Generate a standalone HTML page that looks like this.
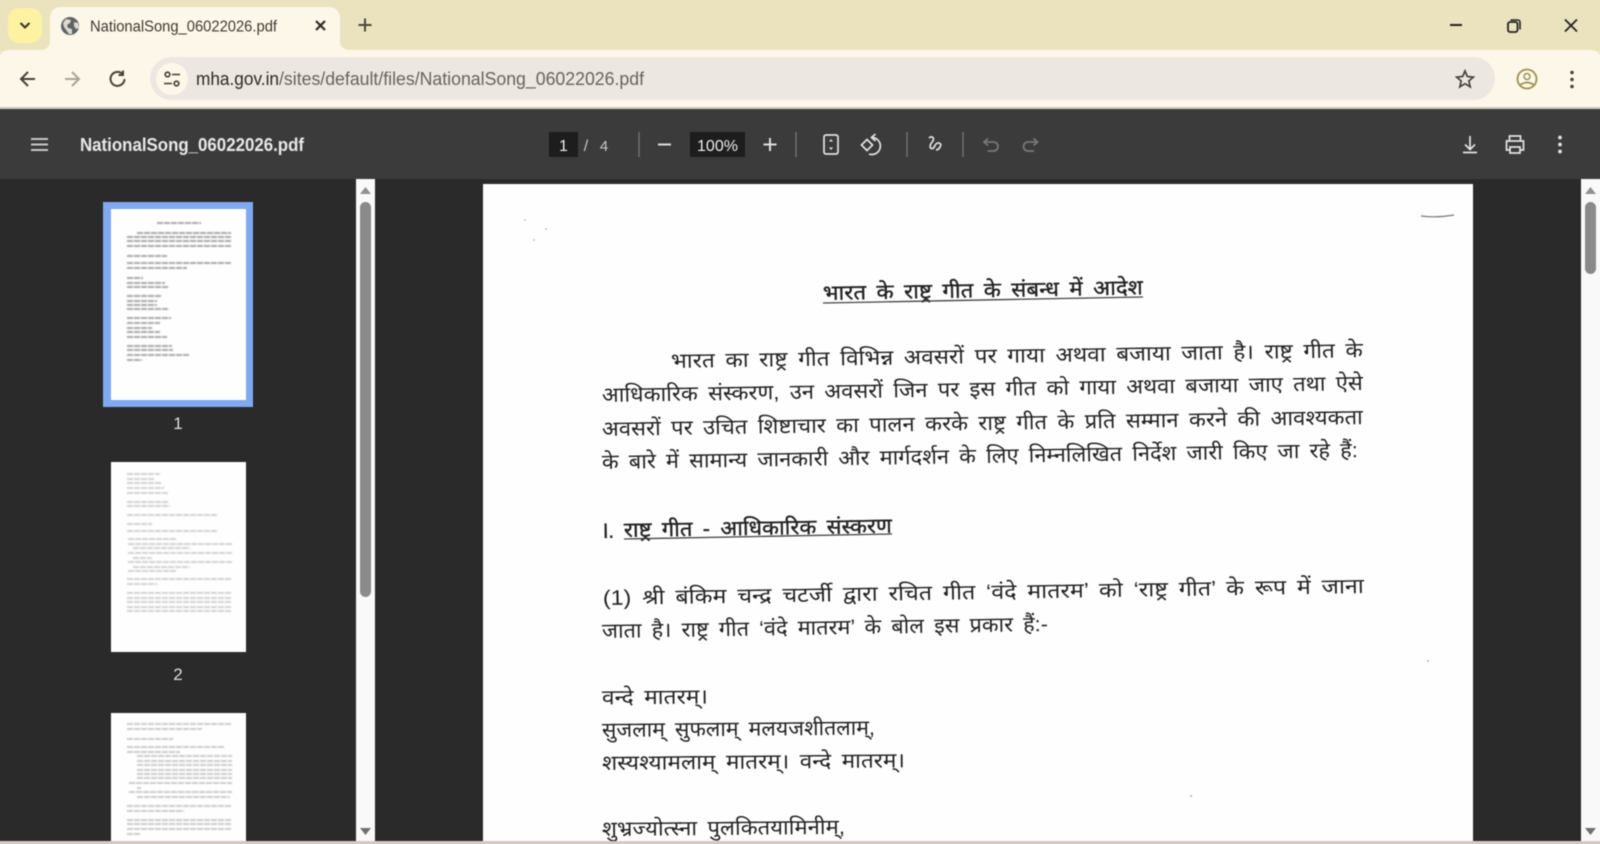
<!DOCTYPE html>
<html lang="hi"><head><meta charset="utf-8"><title>NationalSong_06022026.pdf</title>
<style>
html,body{margin:0;padding:0;width:1600px;height:844px;overflow:hidden;background:#2a2a2b}
svg{display:block;position:absolute;left:0;top:0;overflow:visible}
.u{font-family:"Liberation Sans",sans-serif}
.h{font-family:"Liberation Sans","Noto Sans Devanagari","Lohit Devanagari","FreeSans","DejaVu Sans",sans-serif;font-size:21px;fill:#222;word-spacing:4px}
.b{stroke:#222;stroke-width:.35px}
.ic{fill:none;stroke:#e3e3e3;stroke-width:1.7}
</style></head><body>
<svg width="1600" height="844" viewBox="0 0 1600 844" xmlns="http://www.w3.org/2000/svg" style="filter:blur(.45px)">
<defs><clipPath id="pg"><rect x="483" y="184" width="990" height="657"/></clipPath></defs>
<!-- browser chrome -->
<rect x="-6" y="-6" width="1612" height="56" fill="#ebe3bd"/>
<rect x="-6" y="50" width="1612" height="58" fill="#fdf7e9"/>
<path d="M0 58Q0 50 10 50H1590Q1600 50 1600 58V50H0Z" fill="#ebe3bd"/>
<rect x="-6" y="107" width="1612" height="2" fill="#cfcabb"/>
<rect x="8" y="8" width="34" height="35" rx="11" fill="#fcf2a2"/>
<path d="M20.500 23l4.500 4.500 4.500-4.500" fill="none" stroke="#33311f" stroke-width="2"/>
<path d="M40 50Q50 50 50 40V19Q50 7 62 7H328Q340 7 340 19V40Q340 50 350 50Z" fill="#fdf7e9"/>
<circle cx="70" cy="26" r="9" fill="#5f6368"/>
<path d="M66 19l5 1-1 3-3 2 1 3 4 1v5l-3 0-5-7-1-4zM74 22l4 1 1 5-3 1-2-3z" fill="#fdf7e9" opacity=".8"/>
<text class="u" x="90" y="31.500" font-size="15.500" fill="#3d3a33" textLength="187" lengthAdjust="spacingAndGlyphs">NationalSong_06022026.pdf</text>
<path d="M316 21l9 9M325 21l-9 9" stroke="#2e2c26" stroke-width="2.200"/>
<path d="M365 18.500v13M358.500 25h13" stroke="#4a473c" stroke-width="2"/>
<path d="M1450 25h12" stroke="#222" stroke-width="2"/>
<rect x="1508" y="22" width="9.500" height="10" rx="2" fill="none" stroke="#222" stroke-width="1.800"/>
<path d="M1510.500 20h7q2.500 0 2.500 2.500v7" fill="none" stroke="#222" stroke-width="1.600"/>
<path d="M1565 19.500l12 12M1577 19.500l-12 12" stroke="#222" stroke-width="1.800"/>
<!-- nav -->
<path d="M35 79H21M28 72l-7 7 7 7" fill="none" stroke="#45433a" stroke-width="2"/>
<path d="M65 79h14M72 72l7 7-7 7" fill="none" stroke="#a8a598" stroke-width="2"/>
<path d="M124.500 79a7 7 0 1 1-2.200-5.200M123 70.500v4.500h-4.500" fill="none" stroke="#45433a" stroke-width="2"/>
<rect x="150" y="57" width="1345" height="43" rx="21.500" fill="#ece8e1"/>
<circle cx="172" cy="79" r="16" fill="#fdf7e9"/>
<circle cx="167.500" cy="74.500" r="2.300" fill="none" stroke="#3e3c34" stroke-width="1.600"/>
<circle cx="176.500" cy="83.500" r="2.300" fill="none" stroke="#3e3c34" stroke-width="1.600"/>
<path d="M172 74.500h8M164 83.500h8" stroke="#3e3c34" stroke-width="1.600"/>
<text class="u" x="196" y="85" font-size="18" fill="#2c2a25" textLength="83" lengthAdjust="spacingAndGlyphs">mha.gov.in</text>
<text class="u" x="279" y="85" font-size="18" fill="#66645c" textLength="365" lengthAdjust="spacingAndGlyphs">/sites/default/files/NationalSong_06022026.pdf</text>
<path d="M1465 71l2.300 5.500 6 .6-4.500 3.900 1.400 5.800-5.200-3.100-5.200 3.100 1.400-5.800-4.500-3.900 6-.6z" fill="none" stroke="#45433a" stroke-width="1.700"/>
<circle cx="1527" cy="79" r="9.500" fill="none" stroke="#9c9050" stroke-width="1.800"/>
<circle cx="1527" cy="76.500" r="3" fill="none" stroke="#9c9050" stroke-width="1.500"/>
<path d="M1520 85q7-5 14 0" fill="none" stroke="#9c9050" stroke-width="1.600"/>
<g fill="#45433a"><circle cx="1572" cy="72.500" r="1.800"/><circle cx="1572" cy="79.500" r="1.800"/><circle cx="1572" cy="86.500" r="1.800"/></g>
<!-- pdf toolbar -->
<rect x="-6" y="109" width="1612" height="70" fill="#3b3b3b"/>
<rect x="-6" y="179" width="1612" height="671" fill="#2a2a2b"/>
<path d="M31 139h17M31 144.500h17M31 150h17" stroke="#c8c8c8" stroke-width="2"/>
<text class="u" x="80" y="151" font-size="18.500" font-weight="700" fill="#e8e8e8" textLength="224" lengthAdjust="spacingAndGlyphs">NationalSong_06022026.pdf</text>
<rect x="549" y="132" width="29" height="25" fill="#1d1d1d"/>
<text class="u" x="563.500" y="151" font-size="16" fill="#eee" text-anchor="middle">1</text>
<text class="u" x="586" y="151" font-size="16" fill="#c8c8c8" text-anchor="middle">/</text>
<text class="u" x="604" y="151" font-size="15" fill="#c8c8c8" text-anchor="middle">4</text>
<path d="M639 132v25M796 132v25M907 132v25M963 132v25" stroke="#777" stroke-width="1.300"/>
<path d="M658 144.500h13" stroke="#ddd" stroke-width="2"/>
<rect x="690" y="132" width="55" height="25" fill="#1d1d1d"/>
<text class="u" x="717.500" y="151" font-size="16" fill="#eee" text-anchor="middle">100%</text>
<path d="M770 138v13M763.500 144.500h13" stroke="#ddd" stroke-width="2"/>
<rect x="824" y="135" width="14" height="19" rx="2" class="ic"/>
<path d="M829 141.500l2-2.500 2 2.500zM829 147.500l2 2.500 2-2.500z" fill="#e3e3e3"/>
<path d="M872 137.500a8.500 8.500 0 1 1-3 16.500" class="ic"/>
<path d="M875.500 134l-4 3.500 4 3.500" class="ic"/>
<path d="M867 139.500l5.500 5.500-5.500 5.500-5.500-5.500z" class="ic"/>
<path d="M929 138q2-2 4-.5 1.500 2-2 6-2 4 .5 5 2 .5 3.500-3 1.500-3 4-2.500 3 1 1 4-1 2.500-4 3" class="ic"/>
<path d="M984.500 142h9a4.500 4.500 0 0 1 0 9h-6M988 138.500l-4 3.500 4 3.500" fill="none" stroke="#777" stroke-width="1.800"/>
<path d="M1037 142h-9a4.500 4.500 0 0 0 0 9h6M1033.500 138.500l4 3.500-4 3.500" fill="none" stroke="#777" stroke-width="1.800"/>
<path d="M1470 136v13M1465 144.500l5 5 5-5M1463 152.500h14" class="ic"/>
<path d="M1509.500 141v-5h11v5M1510 150h-3.500v-9h17v9H1520M1510 147h10v6h-10z" class="ic"/>
<g fill="#e3e3e3"><circle cx="1560" cy="137.500" r="1.900"/><circle cx="1560" cy="144.500" r="1.900"/><circle cx="1560" cy="151.500" r="1.900"/></g>
<!-- sidebar scrollbar -->
<rect x="356" y="179" width="19" height="662" fill="#f9f9f9"/>
<rect x="360" y="202" width="11" height="395" rx="5.500" fill="#8a8a8a"/>
<path d="M360 194l5.500-7 5.500 7z" fill="#909090"/>
<path d="M360 828l5.500 7 5.500-7z" fill="#707070"/>
<!-- right scrollbar -->
<rect x="1581" y="179" width="25" height="662" fill="#f9f9f9"/>
<rect x="1585" y="202" width="11" height="72" rx="5.500" fill="#8a8a8a"/>
<path d="M1585 194l5.500-7 5.500 7z" fill="#909090"/>
<path d="M1585 828l5.500 7 5.500-7z" fill="#707070"/>
<!-- thumbnails -->
<rect x="103" y="202" width="150" height="205" fill="#7fa9f0"/>
<rect x="111" y="209" width="135" height="191" fill="#fefefe"/>
<rect x="111" y="462" width="135" height="190" fill="#fefefe"/>
<rect x="111" y="713" width="135" height="128" fill="#fefefe"/>
<g style="filter:blur(.6px)">
<path fill="none" stroke="#8c8c8c" stroke-width="1.600" stroke-dasharray="6 1" d="M157 223h44M137 233h94M127 237h104M127 241h104M127 246h104M127 256h40M127 263h104M127 268h60M127 278h16M127 283h38M127 287h42M127 296h34M127 301h30M127 305h30M127 309h41M127 318h44M127 323h33M127 328h25M127 332h33M127 337h40M127 346h45M127 350h46M127 355h62M127 360h15"/>
<path fill="none" stroke="#c4c4c4" stroke-width="1.500" stroke-dasharray="6 1" d="M127 474h33M127 479h27M127 483h34M127 488h37M127 493h41M127 502h42M127 506h43M127 515h90M127 524h25M127 531h90M128 539h49M128 544h104M133 548h57M128 553h104M133 558h19M128 562h104M133 567h57M128 571h49M127 579h104M127 584h30M127 593h104M127 598h104M127 602h104M127 607h105M127 611h105"/>
<path fill="none" stroke="#bababa" stroke-width="1.500" stroke-dasharray="6 1" d="M127 724h105M127 729h75M127 739h46M127 747h97M127 752h53M137 756h95M137 761h95M137 765h95M137 770h95M137 774h95M137 778h95M129 783h103M137 788h4M129 792h103M137 797h93M127 806h105M127 811h57M127 820h105M127 824h105M127 829h105M127 834h14"/>
</g>
<text class="u" x="178" y="429" font-size="17" fill="#ddd" text-anchor="middle">1</text>
<text class="u" x="178" y="680" font-size="17" fill="#ddd" text-anchor="middle">2</text>
<!-- pdf page -->
<rect x="483" y="184" width="990" height="657" fill="#fefefe"/>
<g clip-path="url(#pg)">
<path d="M1421 216q15 2 33-1" fill="none" stroke="#777" stroke-width="1.200"/>
<g fill="#aaa"><circle cx="525" cy="220" r=".8"/><circle cx="546" cy="229" r=".8"/><circle cx="534" cy="240" r=".8"/><circle cx="1428" cy="661" r="1"/><circle cx="1191" cy="796" r="1"/></g>
<text class="h b" transform="translate(823 300) rotate(-1)" textLength="320" lengthAdjust="spacingAndGlyphs">भारत के राष्ट्र गीत के संबन्ध में आदेश</text>
<path d="M823 303L1143 297" stroke="#444" stroke-width="1.300"/>
<text class="h" transform="translate(671 368) rotate(-.9)" textLength="692" lengthAdjust="spacingAndGlyphs">भारत का राष्ट्र गीत विभिन्न अवसरों पर गाया अथवा बजाया जाता है। राष्ट्र गीत के</text>
<text class="h" transform="translate(602 402) rotate(-.9)" textLength="761" lengthAdjust="spacingAndGlyphs">आधिकारिक संस्करण, उन अवसरों जिन पर इस गीत को गाया अथवा बजाया जाए तथा ऐसे</text>
<text class="h" transform="translate(602 436) rotate(-.9)" textLength="761" lengthAdjust="spacingAndGlyphs">अवसरों पर उचित शिष्टाचार का पालन करके राष्ट्र गीत के प्रति सम्मान करने की आवश्यकता</text>
<text class="h" transform="translate(602 469) rotate(-.9)" textLength="756" lengthAdjust="spacingAndGlyphs">के बारे में सामान्य जानकारी और मार्गदर्शन के लिए निम्नलिखित निर्देश जारी किए जा रहे हैं:</text>
<text class="h b" transform="translate(603 538) rotate(-.9)" textLength="11" lengthAdjust="spacingAndGlyphs">I.</text>
<text class="h b" transform="translate(624 537) rotate(-.9)" textLength="268" lengthAdjust="spacingAndGlyphs">राष्ट्र गीत - आधिकारिक संस्करण</text>
<path d="M624 539L892 534" stroke="#444" stroke-width="1.300"/>
<text class="h" transform="translate(603 605) rotate(-.9)" textLength="761" lengthAdjust="spacingAndGlyphs">(1) श्री बंकिम चन्द्र चटर्जी द्वारा रचित गीत ‘वंदे मातरम’ को ‘राष्ट्र गीत’ के रूप में जाना</text>
<text class="h" transform="translate(602 638) rotate(-.9)" textLength="446" lengthAdjust="spacingAndGlyphs">जाता है। राष्ट्र गीत ‘वंदे मातरम’ के बोल इस प्रकार हैं:-</text>
<text class="h" transform="translate(602 704.500) rotate(-.5)" textLength="106" lengthAdjust="spacingAndGlyphs">वन्दे मातरम्।</text>
<text class="h" transform="translate(602 737) rotate(-.5)" textLength="273" lengthAdjust="spacingAndGlyphs">सुजलाम् सुफलाम् मलयजशीतलाम्,</text>
<text class="h" transform="translate(602 770) rotate(-.5)" textLength="303" lengthAdjust="spacingAndGlyphs">शस्यश्यामलाम् मातरम्। वन्दे मातरम्।</text>
<text class="h" transform="translate(602 836) rotate(-.5)" textLength="243" lengthAdjust="spacingAndGlyphs">शुभ्रज्योत्स्ना पुलकितयामिनीम्,</text>
</g>
<rect x="-6" y="841" width="1612" height="9" fill="#d9c9bd"/>
</svg>
</body></html>
